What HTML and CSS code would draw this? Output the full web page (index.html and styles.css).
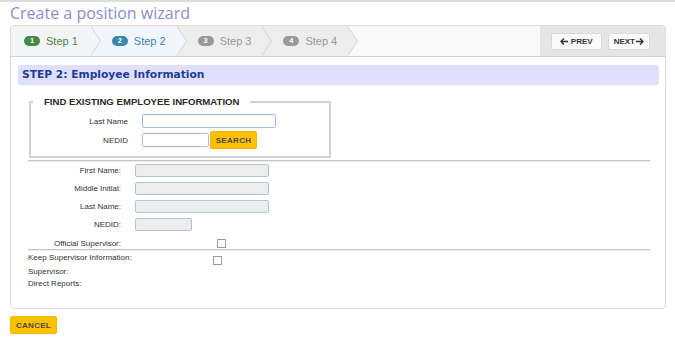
FILE: index.html
```html
<!DOCTYPE html>
<html>
<head>
    <title>Create a position wizard</title>
    <link rel="stylesheet" href="styles.css">
</head>
<body>
    <h1 class="page-title">Create a position wizard</h1>

    <div class="panel">
        <div class="wizard">
            <ul class="steps">
                <li class="complete"><span class="badge">1</span>Step 1</li>
                <li class="active"><span class="badge">2</span>Step 2</li>
                <li><span class="badge">3</span>Step 3</li>
                <li><span class="badge">4</span>Step 4</li>
            </ul>
            <div class="actions">
                <button class="btn-nav btn-prev">
                    <svg width="8" height="7" viewBox="0 0 8 7"><path d="M0 3.5L3.5 0L4.5 1L2.7 2.8H8V4.2H2.7L4.5 6L3.5 7Z" fill="#333"/></svg>
                    PREV
                </button>
                <button class="btn-nav btn-next">
                    NEXT
                    <svg width="8" height="7" viewBox="0 0 8 7"><path d="M8 3.5L4.5 0L3.5 1L5.3 2.8H0V4.2H5.3L3.5 6L4.5 7Z" fill="#333"/></svg>
                </button>
            </div>
        </div>

        <div class="step-content">
            <div class="step-title">STEP 2: Employee Information</div>

            <div class="form">
                <fieldset class="find">
                    <legend>FIND EXISTING EMPLOYEE INFORMATION</legend>
                    <div class="find-grid">
                        <label>Last Name</label>
                        <input type="text" class="field wide">
                        <label>NEDID</label>
                        <div class="inline">
                            <input type="text" class="field short">
                            <button class="btn-gold">SEARCH</button>
                        </div>
                    </div>
                </fieldset>

                <hr>

                <div class="emp-grid">
                    <label>First Name:</label>
                    <input type="text" class="field wide" disabled>
                    <label>Middle Initial:</label>
                    <input type="text" class="field wide" disabled>
                    <label>Last Name:</label>
                    <input type="text" class="field wide" disabled>
                    <label>NEDID:</label>
                    <input type="text" class="field nedid" disabled>
                </div>

                <div class="official-row">
                    <label>Official Supervisor:</label>
                    <input type="checkbox" class="check">
                </div>

                <hr class="thin">

                <div class="keep-row">
                    <label>Keep Supervisor Information:</label>
                    <input type="checkbox" class="check">
                </div>
                <div class="info-line">Supervisor:</div>
                <div class="info-line">Direct Reports:</div>
            </div>
        </div>
    </div>

    <button class="btn-gold cancel">CANCEL</button>
</body>
</html>
```

FILE: styles.css
```css
body {
    margin: 0;
    padding: 0 9px 0 10px;
    border-top: 2px solid #dcdcdc;
    background: #fff;
    font-family: "Liberation Sans", Arial, sans-serif;
    color: #333;
}
.page-title {
    margin: 0 0 1px;
    font-family: "Open Sans", sans-serif;
    font-weight: normal;
    font-size: 16px;
    line-height: 22px;
    color: #8d8dcb;
}
.panel {
    border: 1px solid #dcdcdc;
    border-radius: 4px;
}
.wizard {
    display: flex;
    height: 30px;
    background: #f9f9f9;
    border-bottom: 1px solid #d4d4d4;
    border-radius: 4px 4px 0 0;
}
.steps {
    list-style: none;
    margin: 0;
    padding: 0;
    display: flex;
}
.steps li {
    position: relative;
    display: flex;
    align-items: center;
    padding: 0 10px 0 22px;
    background: #ededed;
    color: #999;
    font-size: 11px;
}
.steps li:first-child {
    padding: 0 12px 0 13px;
    border-radius: 4px 0 0 0;
}
.steps li::before,
.steps li::after {
    content: "";
    position: absolute;
    top: 0;
    border-top: 15px solid transparent;
    border-bottom: 15px solid transparent;
    border-left: 10px solid #d4d4d4;
}
.steps li::before {
    right: -11px;
    z-index: 1;
}
.steps li::after {
    right: -10px;
    z-index: 2;
    border-left-color: #ededed;
}
.steps li.complete {
    background: #f3f4f5;
    color: #468847;
}
.steps li.complete::after {
    border-left-color: #f3f4f5;
}
.steps li.active {
    background: #f1f6fc;
    color: #3a87ad;
}
.steps li.active::after {
    border-left-color: #f1f6fc;
}
.badge {
    display: inline-block;
    width: 16px;
    height: 10px;
    line-height: 10px;
    margin-right: 6px;
    border-radius: 5px;
    background: #999;
    color: #fff;
    font-size: 7.5px;
    font-weight: bold;
    text-align: center;
}
.complete .badge {
    background: #468847;
}
.active .badge {
    background: #3a87ad;
}
.actions {
    margin-left: auto;
    display: flex;
    align-items: center;
    gap: 6px;
    padding: 0 15px 0 11px;
    background: #e6e6e6;
    border-radius: 0 4px 0 0;
}
.btn-nav {
    display: flex;
    align-items: center;
    gap: 3px;
    height: 17px;
    padding: 0 8px;
    background: #fafafa;
    border: 1px solid #d9d9d9;
    border-radius: 2px;
    font-family: "Liberation Sans", Arial, sans-serif;
    font-size: 8px;
    font-weight: bold;
    color: #333;
}
.btn-next {
    padding: 0 5px;
    gap: 1px;
}
.step-content {
    padding: 8px 6px 18px 7px;
}
.step-title {
    height: 20px;
    line-height: 20px;
    padding-left: 4px;
    background: #e0e0fc;
    border-radius: 3px;
    font-family: "DejaVu Sans", Verdana, sans-serif;
    font-size: 10.7px;
    font-weight: bold;
    color: #1c3d96;
}
.form {
    margin: 0 9px 0 10px;
    font-size: 8px;
}
.find {
    box-sizing: border-box;
    width: 302px;
    margin: 11px 0 0 1px;
    padding: 0 2px 7px;
    border: 2px solid #d2d2d2;
}
.find legend {
    padding: 0 11px;
    font-size: 9.6px;
    font-weight: bold;
    line-height: 12px;
    color: #2a2a2a;
}
.find-grid {
    display: grid;
    grid-template-columns: 95px auto;
    column-gap: 14px;
    row-gap: 3px;
    align-items: center;
    padding-top: 6px;
}
.find-grid label,
.emp-grid label,
.official-row label {
    text-align: right;
}
.inline {
    display: flex;
    align-items: center;
    gap: 1px;
}
.field {
    box-sizing: border-box;
    height: 14px;
    margin: 0;
    padding: 0 3px;
    border: 1px solid #a9bdd4;
    border-radius: 2px;
    background: #fff;
}
.field:disabled {
    height: 13px;
    background: #ededed;
    border-color: #b3c3d6;
}
.wide {
    width: 134px;
}
.short {
    width: 67px;
}
.nedid {
    width: 57px;
}
.btn-gold {
    height: 18px;
    width: 47px;
    padding: 0;
    background: #ffc000;
    border: 1px solid #f5b800;
    border-radius: 2px;
    font-family: "Liberation Sans", Arial, sans-serif;
    font-size: 8px;
    font-weight: bold;
    letter-spacing: 0.3px;
    color: #4a4a4a;
}
hr {
    margin: 2px 0 0;
    height: 0;
    border: 0;
    border-top: 1px solid #c4c4c4;
    border-bottom: 1px solid #ededed;
}
hr.thin {
    margin-top: 1px;
}
.emp-grid {
    display: grid;
    grid-template-columns: 93px auto;
    column-gap: 14px;
    row-gap: 5px;
    align-items: center;
    justify-items: start;
    margin-top: 2px;
}
.emp-grid label {
    justify-self: end;
}
.official-row {
    display: grid;
    grid-template-columns: 93px auto;
    column-gap: 14px;
    align-items: center;
    margin-top: 8px;
}
.official-row .check {
    margin-left: 82px;
}
.check {
    appearance: none;
    width: 9px;
    height: 9px;
    margin: 0;
    border: 1px solid #9a9a9a;
    background: #fff;
}
.keep-row {
    display: flex;
    align-items: flex-start;
    margin-top: 2px;
}
.keep-row label {
    width: 185px;
    line-height: 10px;
}
.keep-row .check {
    margin-top: 3px;
}
.info-line {
    line-height: 12px;
}
.keep-row + .info-line {
    margin-top: 1px;
}
.cancel {
    display: block;
    margin-top: 7px;
}
```
